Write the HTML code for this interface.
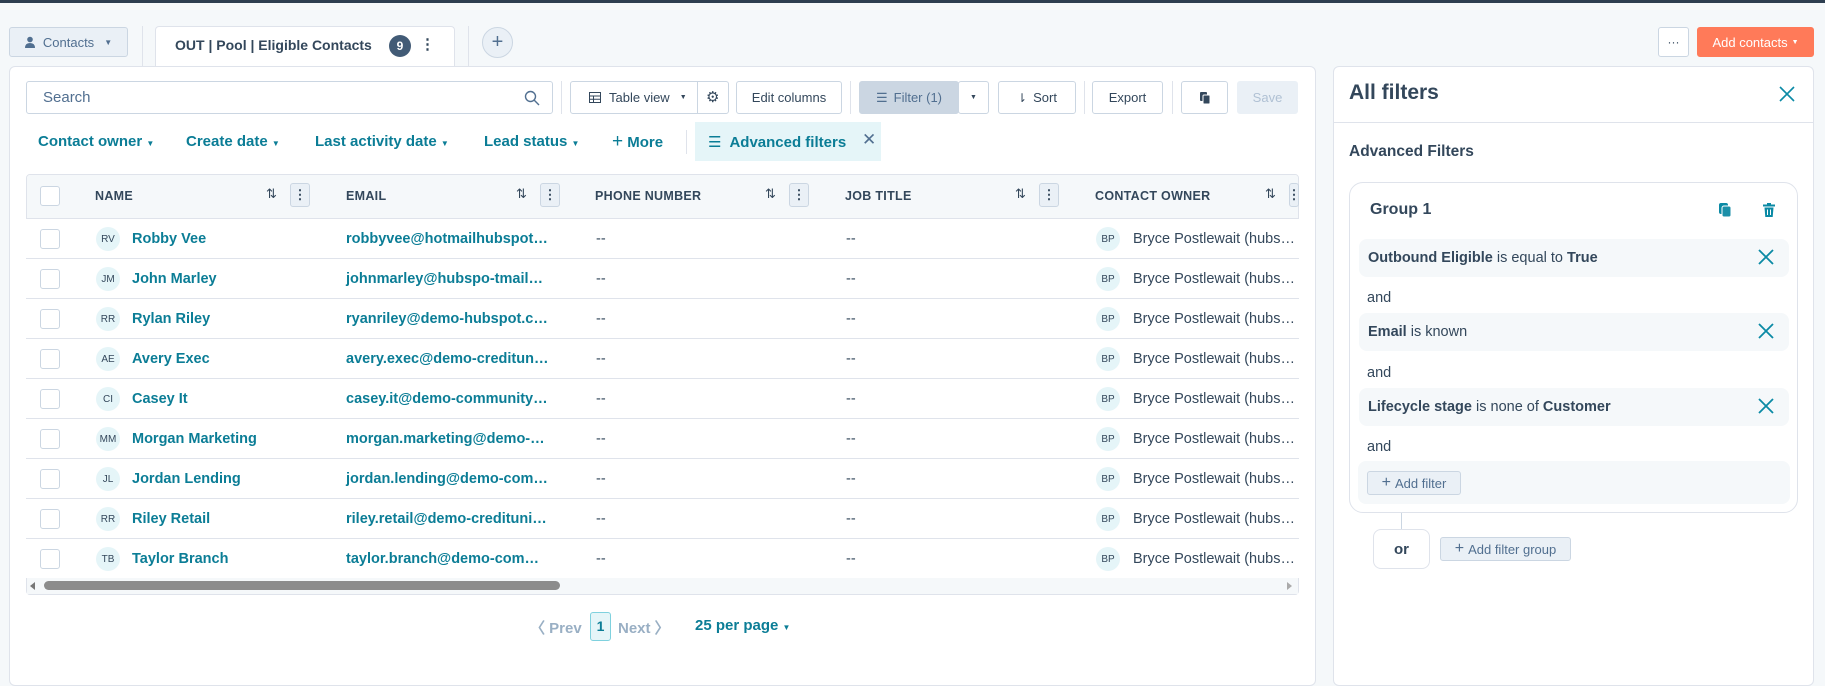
<!DOCTYPE html>
<html><head><meta charset="utf-8">
<style>
*{box-sizing:border-box;margin:0;padding:0}
body{width:1825px;height:664px;overflow:hidden;background:#f5f8fa;font-family:"Liberation Sans",sans-serif;color:#33475b;position:relative}
.a{position:absolute}
.btn{position:absolute;border:1px solid #cbd6e2;border-radius:3px;background:#fff;font-size:13px;color:#33475b;display:flex;align-items:center;justify-content:center}
.link{color:#0b7d96;font-weight:bold}
.row{position:absolute;left:26px;width:1273px;height:40px;border-top:1px solid #dfe3eb;background:#fff}
.row>*,.hdr>*{margin-left:-10px}
.cb{position:absolute;left:24px;top:10px;width:20px;height:20px;border:1px solid #cbd6e2;border-radius:3px;background:#fff}
.av{position:absolute;width:24px;height:24px;border-radius:50%;background:#e5f5f8;font-size:10px;color:#33475b;display:flex;align-items:center;justify-content:center;top:8px}
.cell{position:absolute;top:12px;font-size:14.5px;white-space:nowrap}
.hd{position:absolute;top:15px;font-size:12.5px;font-weight:bold;letter-spacing:.3px}
.srt{position:absolute;top:12px;font-size:13px;color:#33475b}
.mn{position:absolute;top:9px;width:20px;height:24px;border:1px solid #cbd6e2;border-radius:3px;background:#eaf0f6;font-weight:bold;font-size:13px;display:flex;align-items:center;justify-content:center}
.fr{position:absolute;left:1359px;width:430px;height:38px;border-radius:8px;background:#f5f8fa;font-size:14.5px;padding-left:9px;display:flex;align-items:center}
.x{position:absolute;right:14px;top:9px}
.and{position:absolute;left:1367px;font-size:14.5px}
</style></head><body>
<div class="a" style="left:0;top:0;width:1825px;height:3px;background:#2d3e50"></div>
<div class="btn" style="left:9px;top:27px;width:119px;height:30px;background:#eaf0f6;color:#516f90">
<svg width="10" height="12" viewBox="0 0 10 12" style="margin-right:8px"><circle cx="5" cy="3.5" r="2.8" fill="#516f90"/><path d="M0 12 Q0 7 5 7 Q10 7 10 12Z" fill="#516f90"/></svg>Contacts<span style="font-size:8px;margin-left:10px">▼</span></div>
<div class="a" style="left:142px;top:26px;width:1px;height:40px;background:#dfe3eb"></div>
<div class="a" style="left:155px;top:26px;width:300px;height:41px;background:#fff;border:1px solid #dfe3eb;border-bottom:none;border-radius:4px 4px 0 0"></div>
<div class="a" style="left:175px;top:37px;font-size:14px;font-weight:bold">OUT | Pool | Eligible Contacts</div>
<div class="a" style="left:389px;top:35px;width:22px;height:22px;border-radius:50%;background:#425b76;color:#fff;font-size:12px;font-weight:bold;display:flex;align-items:center;justify-content:center">9</div>
<div class="a" style="left:420px;top:35px;font-size:15px;font-weight:bold">⋮</div>
<div class="a" style="left:468px;top:26px;width:1px;height:40px;background:#dfe3eb"></div>
<div class="a" style="left:482px;top:27px;width:31px;height:31px;border-radius:50%;border:1px solid #cbd6e2;background:#eaf0f6;text-align:center;font-size:20px;line-height:28px;color:#516f90">+</div>
<div class="btn" style="left:1658px;top:27px;width:31px;height:30px;font-size:12px">···</div>
<div class="btn" style="left:1697px;top:27px;width:117px;height:30px;background:#ff7a59;border-color:#ff7a59;color:#fff">Add contacts<span style="font-size:7px;margin-left:4px">▼</span></div>

<div class="a" style="left:9px;top:66px;width:1307px;height:620px;background:#fff;border:1px solid #dfe3eb;border-radius:6px"></div>
<div class="btn" style="left:26px;top:81px;width:527px;height:33px;justify-content:flex-start;padding-left:16px;color:#516f90;font-size:15px">Search
<svg class="a" style="right:12px;top:8px" width="16" height="16" viewBox="0 0 16 16"><circle cx="6.5" cy="6.5" r="5" fill="none" stroke="#516f90" stroke-width="1.4"/><path d="M10.3 10.3L15 15" stroke="#516f90" stroke-width="1.4"/></svg></div>
<div class="a" style="left:561px;top:81px;width:1px;height:33px;background:#dfe3eb"></div>
<div class="btn" style="left:570px;top:81px;width:159px;height:33px;justify-content:flex-start;padding-left:18px">
<svg width="12" height="11" viewBox="0 0 12 11" style="margin-right:8px"><rect x=".5" y=".5" width="11" height="10" fill="none" stroke="#33475b"/><path d="M.5 4H11.5M.5 7.3H11.5M4.5 4V10.5" stroke="#33475b"/></svg>Table view<span style="font-size:7px;margin-left:10px">▼</span>
<div class="a" style="left:126px;top:0;width:1px;height:31px;background:#cbd6e2"></div><span class="a" style="left:135px;top:6px;font-size:15px">⚙</span></div>
<div class="btn" style="left:736px;top:81px;width:106px;height:33px">Edit columns</div>
<div class="a" style="left:850px;top:81px;width:1px;height:33px;background:#dfe3eb"></div>
<div class="btn" style="left:859px;top:81px;width:100px;height:33px;background:#cbd6e2;color:#516f90"><span style="margin-right:6px">☰</span>Filter (1)</div>
<div class="btn" style="left:958px;top:81px;width:31px;height:33px;font-size:7px">▼</div>
<div class="btn" style="left:998px;top:81px;width:78px;height:33px"><span style="margin-right:6px;font-size:12px">⇂</span>Sort</div>
<div class="a" style="left:1084px;top:81px;width:1px;height:33px;background:#dfe3eb"></div>
<div class="btn" style="left:1092px;top:81px;width:71px;height:33px">Export</div>
<div class="a" style="left:1172px;top:81px;width:1px;height:33px;background:#dfe3eb"></div>
<div class="btn" style="left:1181px;top:81px;width:47px;height:33px"><svg width="12" height="14" viewBox="0 0 12 14"><rect x="1" y="1" width="7" height="9" rx="1" fill="#33475b"/><rect x="4" y="4" width="7" height="9" rx="1" fill="#33475b" stroke="#fff"/></svg></div>
<div class="btn" style="left:1237px;top:81px;width:61px;height:33px;background:#eaf0f6;border-color:#eaf0f6;color:#b0c1d4">Save</div>

<div class="a link" style="left:38px;top:133px;font-size:15px">Contact owner <span style="font-size:8px">▼</span></div>
<div class="a link" style="left:186px;top:133px;font-size:15px">Create date <span style="font-size:8px">▼</span></div>
<div class="a link" style="left:315px;top:133px;font-size:15px">Last activity date <span style="font-size:8px">▼</span></div>
<div class="a link" style="left:484px;top:133px;font-size:15px">Lead status <span style="font-size:8px">▼</span></div>
<div class="a link" style="left:612px;top:131px;font-size:15px"><span style="font-weight:normal;font-size:19px">+</span> More</div>
<div class="a" style="left:686px;top:130px;width:1px;height:24px;background:#dfe3eb"></div>
<div class="a" style="left:695px;top:122px;width:186px;height:39px;background:#e5f5f8"></div>
<div class="a link" style="left:708px;top:133px;font-size:15px"><span style="font-weight:normal;margin-right:8px">☰</span>Advanced filters</div>
<div class="a" style="left:862px;top:130px;font-size:17px;color:#516f90">✕</div>

<div class="a" style="left:26px;top:174px;width:1273px;height:421px;border:1px solid #dfe3eb;border-radius:4px;background:#fff;overflow:hidden">
<div class="a" style="left:0;top:0;width:1273px;height:44px;background:#f5f8fa"></div>
</div>
<div class="a hdr" style="left:26px;top:174px;width:1273px;height:44px">
<div class="cb" style="left:24px;top:12px"></div>
<div class="hd" style="left:79px">NAME</div><div class="srt" style="left:250px">⇅</div><div class="mn" style="left:274px">⋮</div>
<div class="hd" style="left:330px">EMAIL</div><div class="srt" style="left:500px">⇅</div><div class="mn" style="left:524px">⋮</div>
<div class="hd" style="left:579px">PHONE NUMBER</div><div class="srt" style="left:749px">⇅</div><div class="mn" style="left:773px">⋮</div>
<div class="hd" style="left:829px">JOB TITLE</div><div class="srt" style="left:999px">⇅</div><div class="mn" style="left:1023px">⋮</div>
<div class="hd" style="left:1079px">CONTACT OWNER</div><div class="srt" style="left:1249px">⇅</div><div class="mn" style="left:1273px;width:10px">⋮</div>
</div>

<div class="row" style="top:218px"><div class="cb"></div><div class="av" style="left:80px">RV</div><div class="cell link" style="left:116px">Robby Vee</div><div class="cell link" style="left:330px">robbyvee@hotmailhubspot…</div><div class="cell" style="left:580px">--</div><div class="cell" style="left:830px">--</div><div class="av" style="left:1080px">BP</div><div class="cell" style="left:1117px">Bryce Postlewait (hubs…</div></div>
<div class="row" style="top:258px"><div class="cb"></div><div class="av" style="left:80px">JM</div><div class="cell link" style="left:116px">John Marley</div><div class="cell link" style="left:330px">johnmarley@hubspo-tmail…</div><div class="cell" style="left:580px">--</div><div class="cell" style="left:830px">--</div><div class="av" style="left:1080px">BP</div><div class="cell" style="left:1117px">Bryce Postlewait (hubs…</div></div>
<div class="row" style="top:298px"><div class="cb"></div><div class="av" style="left:80px">RR</div><div class="cell link" style="left:116px">Rylan Riley</div><div class="cell link" style="left:330px">ryanriley@demo-hubspot.c…</div><div class="cell" style="left:580px">--</div><div class="cell" style="left:830px">--</div><div class="av" style="left:1080px">BP</div><div class="cell" style="left:1117px">Bryce Postlewait (hubs…</div></div>
<div class="row" style="top:338px"><div class="cb"></div><div class="av" style="left:80px">AE</div><div class="cell link" style="left:116px">Avery Exec</div><div class="cell link" style="left:330px">avery.exec@demo-creditun…</div><div class="cell" style="left:580px">--</div><div class="cell" style="left:830px">--</div><div class="av" style="left:1080px">BP</div><div class="cell" style="left:1117px">Bryce Postlewait (hubs…</div></div>
<div class="row" style="top:378px"><div class="cb"></div><div class="av" style="left:80px">CI</div><div class="cell link" style="left:116px">Casey It</div><div class="cell link" style="left:330px">casey.it@demo-community…</div><div class="cell" style="left:580px">--</div><div class="cell" style="left:830px">--</div><div class="av" style="left:1080px">BP</div><div class="cell" style="left:1117px">Bryce Postlewait (hubs…</div></div>
<div class="row" style="top:418px"><div class="cb"></div><div class="av" style="left:80px">MM</div><div class="cell link" style="left:116px">Morgan Marketing</div><div class="cell link" style="left:330px">morgan.marketing@demo-…</div><div class="cell" style="left:580px">--</div><div class="cell" style="left:830px">--</div><div class="av" style="left:1080px">BP</div><div class="cell" style="left:1117px">Bryce Postlewait (hubs…</div></div>
<div class="row" style="top:458px"><div class="cb"></div><div class="av" style="left:80px">JL</div><div class="cell link" style="left:116px">Jordan Lending</div><div class="cell link" style="left:330px">jordan.lending@demo-com…</div><div class="cell" style="left:580px">--</div><div class="cell" style="left:830px">--</div><div class="av" style="left:1080px">BP</div><div class="cell" style="left:1117px">Bryce Postlewait (hubs…</div></div>
<div class="row" style="top:498px"><div class="cb"></div><div class="av" style="left:80px">RR</div><div class="cell link" style="left:116px">Riley Retail</div><div class="cell link" style="left:330px">riley.retail@demo-credituni…</div><div class="cell" style="left:580px">--</div><div class="cell" style="left:830px">--</div><div class="av" style="left:1080px">BP</div><div class="cell" style="left:1117px">Bryce Postlewait (hubs…</div></div>
<div class="row" style="top:538px"><div class="cb"></div><div class="av" style="left:80px">TB</div><div class="cell link" style="left:116px">Taylor Branch</div><div class="cell link" style="left:330px">taylor.branch@demo-com…</div><div class="cell" style="left:580px">--</div><div class="cell" style="left:830px">--</div><div class="av" style="left:1080px">BP</div><div class="cell" style="left:1117px">Bryce Postlewait (hubs…</div></div>
<div class="a" style="left:27px;top:578px;width:1271px;height:16px;background:#f5f8fa"></div>
<div class="a" style="left:30px;top:582px;border-right:5px solid #777;border-top:4px solid transparent;border-bottom:4px solid transparent"></div>
<div class="a" style="left:44px;top:581px;width:516px;height:9px;border-radius:5px;background:#8c8c8c"></div>
<div class="a" style="left:1287px;top:582px;border-left:5px solid #aaa;border-top:4px solid transparent;border-bottom:4px solid transparent"></div>

<div class="a" style="left:530px;top:617px;font-size:15px;font-weight:bold;color:#99afc4">〈 Prev</div>
<div class="a" style="left:590px;top:612px;width:21px;height:29px;border:1px solid #7fd1de;border-radius:3px;background:#e5f5f8;color:#0b7d96;font-weight:bold;font-size:14px;text-align:center;line-height:27px">1</div>
<div class="a" style="left:618px;top:617px;font-size:15px;font-weight:bold;color:#99afc4">Next 〉</div>
<div class="a link" style="left:695px;top:617px;font-size:15px">25 per page <span style="font-size:8px">▼</span></div>

<div class="a" style="left:1333px;top:66px;width:481px;height:620px;background:#fff;border:1px solid #dfe3eb;border-radius:6px"></div>
<div class="a" style="left:1349px;top:81px;font-size:21px;font-weight:bold">All filters</div>
<svg class="a" style="left:1779px;top:86px" width="16" height="16" viewBox="0 0 16 16"><path d="M1 1L15 15M15 1L1 15" stroke="#0b8aa5" stroke-width="1.6"/></svg>
<div class="a" style="left:1334px;top:122px;width:479px;height:1px;background:#dfe3eb"></div>
<div class="a" style="left:1349px;top:143px;font-size:15.5px;font-weight:bold">Advanced Filters</div>
<div class="a" style="left:1349px;top:182px;width:449px;height:331px;border:1px solid #dfe3eb;border-radius:14px;background:#fff"></div>
<div class="a" style="left:1370px;top:201px;font-size:16px;font-weight:bold">Group 1</div>
<svg class="a" style="left:1719px;top:203px" width="13" height="15" viewBox="0 0 13 15"><rect x="0" y="0" width="9" height="11" rx="2" fill="#0b8aa5"/><rect x="3" y="3" width="9" height="11" rx="2" fill="#1c8fa8" stroke="#fff"/></svg>
<svg class="a" style="left:1763px;top:203px" width="12" height="14" viewBox="0 0 12 14"><rect x="0" y="1.5" width="12" height="2" fill="#0b8aa5"/><rect x="4" y="0" width="4" height="2" fill="#0b8aa5"/><path d="M1.5 4.5H10.5L9.7 14H2.3Z" fill="#0b8aa5"/><path d="M4.5 6.5V12M7.5 6.5V12" stroke="#fff"/></svg>
<div class="fr" style="top:239px"><b>Outbound Eligible</b>&nbsp;is equal to&nbsp;<b>True</b><svg class="x" width="18" height="18" viewBox="0 0 18 18"><path d="M2 2L16 16M16 2L2 16" stroke="#0b8aa5" stroke-width="1.8"/></svg></div>
<div class="and" style="top:290px">and</div>
<div class="fr" style="top:313px"><b>Email</b>&nbsp;is known<svg class="x" width="18" height="18" viewBox="0 0 18 18"><path d="M2 2L16 16M16 2L2 16" stroke="#0b8aa5" stroke-width="1.8"/></svg></div>
<div class="and" style="top:365px">and</div>
<div class="fr" style="top:388px"><b>Lifecycle stage</b>&nbsp;is none of&nbsp;<b>Customer</b><svg class="x" width="18" height="18" viewBox="0 0 18 18"><path d="M2 2L16 16M16 2L2 16" stroke="#0b8aa5" stroke-width="1.8"/></svg></div>
<div class="and" style="top:439px">and</div>
<div class="a" style="left:1358px;top:461px;width:432px;height:43px;border-radius:8px;background:#f5f8fa"></div>
<div class="a" style="left:1367px;top:471px;width:94px;height:24px;border:1px solid #cbd6e2;border-radius:3px;background:#eaf0f6;font-size:13px;color:#516f90;display:flex;align-items:center;justify-content:center"><span style="font-size:16px;margin-right:4px">+</span>Add filter</div>
<div class="a" style="left:1401px;top:513px;width:1px;height:16px;background:#cbd6e2"></div>
<div class="a" style="left:1373px;top:529px;width:57px;height:40px;border:1px solid #dfe3eb;border-radius:8px;background:#fff;font-size:15px;font-weight:bold;display:flex;align-items:center;justify-content:center">or</div>
<div class="a" style="left:1440px;top:537px;width:131px;height:24px;border:1px solid #cbd6e2;border-radius:3px;background:#eaf0f6;font-size:13px;color:#516f90;display:flex;align-items:center;justify-content:center"><span style="font-size:16px;margin-right:4px">+</span>Add filter group</div>
</body></html>
